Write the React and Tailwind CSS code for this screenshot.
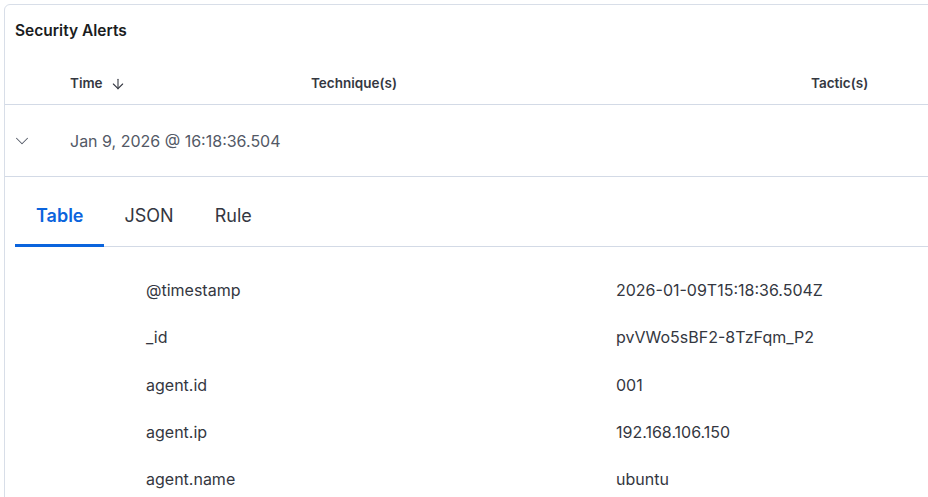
import { ChevronDown, ArrowDown } from "lucide-react";

const fields = [
  ["@timestamp", "2026-01-09T15:18:36.504Z"],
  ["_id", "pvVWo5sBF2-8TzFqm_P2"],
  ["agent.id", "001"],
  ["agent.ip", "192.168.106.150"],
  ["agent.name", "ubuntu"],
];

export default function App() {
  return (
    <div
      className="h-[497px] w-[928px] overflow-hidden bg-white pl-1 pt-1"
      style={{ fontFamily: "Inter, 'Noto Sans', sans-serif" }}
    >
      <div className="h-[600px] w-[1000px] rounded-tl-md border border-[#d8dee8] bg-white">
        {/* Title */}
        <div className="flex h-[52px] items-center px-[10px]">
          <h2 className="text-[15.5px] font-semibold text-[#1a1c21]">Security Alerts</h2>
        </div>

        {/* Header */}
        <div className="flex h-[48px] items-center border-b border-[#d3dae6] pt-[6px] text-[13.5px] font-semibold text-[#343741]">
          <div className="w-[65px]" />
          <div className="flex w-[241px] items-center gap-[7px]">
            Time
            <ArrowDown size={16} strokeWidth={1.6} className="text-[#343741]" />
          </div>
          <div className="w-[500px]">Technique(s)</div>
          <div>Tactic(s)</div>
        </div>

        {/* Alert row */}
        <div className="flex h-[72px] items-center border-b border-[#d3dae6] text-[16px] text-[#535966]">
          <div className="flex w-[65px] justify-start pl-[6px]">
            <ChevronDown size={22} strokeWidth={1.1} className="text-[#535966]" />
          </div>
          <div>Jan 9, 2026 @ 16:18:36.504</div>
        </div>

        {/* Tabs */}
        <div className="px-[10px] pt-[25px]">
          <div className="flex border-b border-[#d3dae6] text-[18px] leading-[27px]">
            <div className="-mb-px border-b-[3px] border-[#0b64dd] pl-[21px] pr-[20px] pb-[15px] font-semibold text-[#0b64dd]">
              Table
            </div>
            <div className="pl-[21px] pr-[20px] pb-[15px] text-[#343741]">JSON</div>
            <div className="pl-[21px] pr-[20px] pb-[15px] text-[#343741]">Rule</div>
          </div>
        </div>

        {/* Field table */}
        <div className="pt-[31px] text-[16px] leading-[24px] text-[#343741]">
          {fields.map(([k, v]) => (
            <div key={k} className="flex h-[47.3px] items-start">
              <div className="w-[611px] pl-[141px]">{k}</div>
              <div>{v}</div>
            </div>
          ))}
        </div>
      </div>
    </div>
  );
}
